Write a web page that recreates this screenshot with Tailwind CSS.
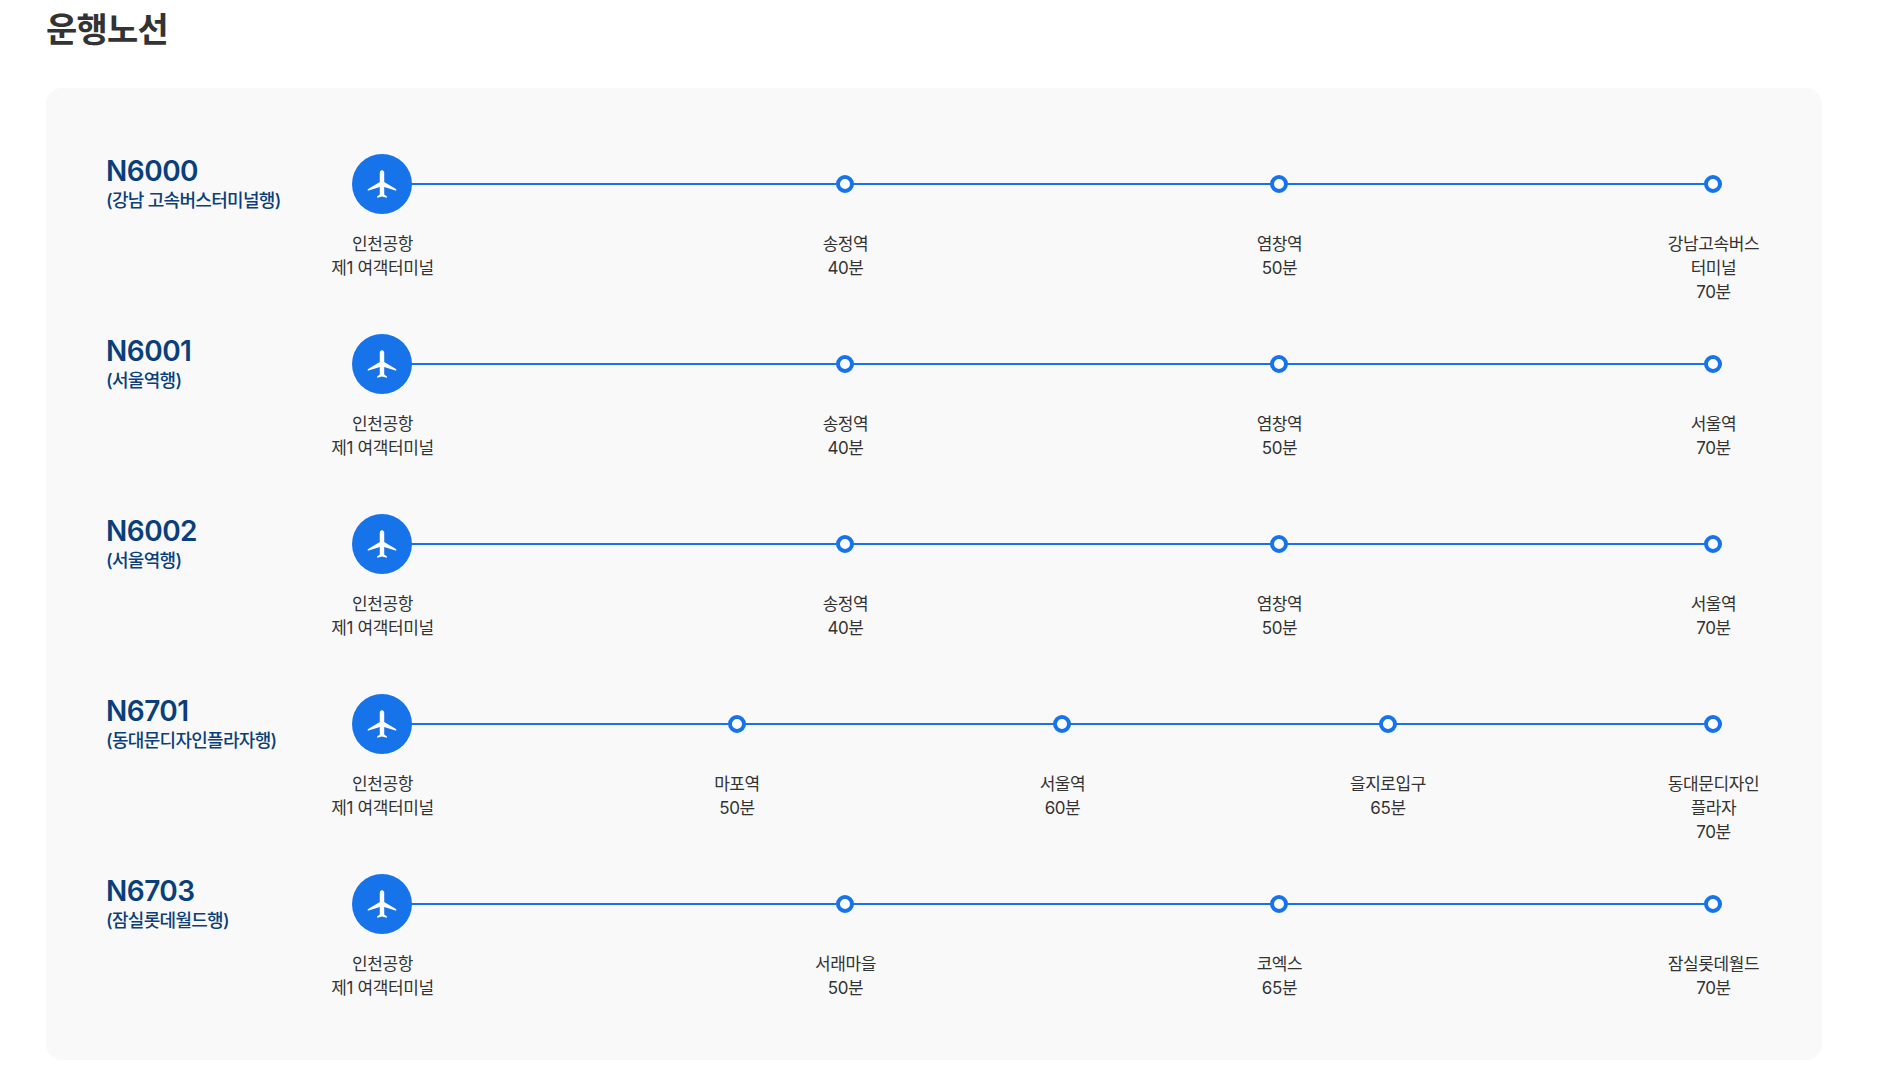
<!DOCTYPE html>
<html lang="ko">
<head>
    <meta charset="UTF-8">
    <title>운행노선</title>
    <script src="https://cdn.jsdelivr.net/npm/@tailwindcss/browser@4"></script>
</head>
<body class="bg-white font-['Inter','Noto_Sans_CJK_KR',sans-serif] text-[#333]">
    <div class="px-[46px]">
        <h2 class="h-[88px] pt-[9px] text-[34px] leading-[42px] font-bold tracking-[-0.8px] text-[#333]">운행노선</h2>

        <div class="w-[1776px] h-[972px] rounded-2xl bg-[#f9f9f9] pt-[66px] px-[60px]">

            <!-- N6000 -->
            <div class="flex h-[180px]">
                <div class="w-[198px] pt-[1px] text-[#0b3f7a]">
                    <p class="text-[28px] leading-[32px] font-semibold tracking-[-0.5px]">N6000</p>
                    <p class="mt-[2px] text-[18px] leading-[24px] font-medium tracking-[-0.7px]">(강남 고속버스터미널행)</p>
                </div>
                <div class="relative flex flex-1 justify-between">
                    <div class="absolute left-[70px] right-[40px] top-[29px] h-[2px] bg-[#1673ea]"></div>
                    <div class="relative flex w-[156px] flex-col items-center">
                        <div class="flex h-[60px] w-[60px] items-center justify-center rounded-full bg-[#1673ea]">
                            <svg class="mt-[1px] h-[38px] w-[38px]" viewBox="0 0 24 24" fill="#fff"><path d="M21 15.6v-.9l-7.600-4.600V4.200c0-.8-.6-1.500-1.400-1.500s-1.400.7-1.400 1.500v5.900L3 14.700v.9l7.600-2.400v4.800l-1.700 1.200v.9l3.100-.8 3.100.8v-.9l-1.700-1.200v-4.800z"/></svg>
                        </div>
                        <p class="mt-[18px] pl-[1px] text-center text-[17px] leading-[24px] whitespace-nowrap tracking-[-0.4px]">인천공항<br>제1 여객터미널</p>
                    </div>
                    <div class="relative flex w-[98px] flex-col items-center">
                        <div class="mt-[21px] h-[18px] w-[18px] rounded-full border-[4px] border-[#1673ea] bg-white"></div>
                        <p class="mt-[39px] pl-[1px] text-center text-[17px] leading-[24px] whitespace-nowrap tracking-[-0.4px]">송정역<br>40분</p>
                    </div>
                    <div class="relative flex w-[98px] flex-col items-center">
                        <div class="mt-[21px] h-[18px] w-[18px] rounded-full border-[4px] border-[#1673ea] bg-white"></div>
                        <p class="mt-[39px] pl-[1px] text-center text-[17px] leading-[24px] whitespace-nowrap tracking-[-0.4px]">염창역<br>50분</p>
                    </div>
                    <div class="relative flex w-[98px] flex-col items-center">
                        <div class="mt-[21px] h-[18px] w-[18px] rounded-full border-[4px] border-[#1673ea] bg-white"></div>
                        <p class="mt-[39px] pl-[1px] text-center text-[17px] leading-[24px] whitespace-nowrap tracking-[-0.4px]">강남고속버스<br>터미널<br>70분</p>
                    </div>
                </div>
            </div>

            <!-- N6001 -->
            <div class="flex h-[180px]">
                <div class="w-[198px] pt-[1px] text-[#0b3f7a]">
                    <p class="text-[28px] leading-[32px] font-semibold tracking-[-0.5px]">N6001</p>
                    <p class="mt-[2px] text-[18px] leading-[24px] font-medium tracking-[-0.7px]">(서울역행)</p>
                </div>
                <div class="relative flex flex-1 justify-between">
                    <div class="absolute left-[70px] right-[40px] top-[29px] h-[2px] bg-[#1673ea]"></div>
                    <div class="relative flex w-[156px] flex-col items-center">
                        <div class="flex h-[60px] w-[60px] items-center justify-center rounded-full bg-[#1673ea]">
                            <svg class="mt-[1px] h-[38px] w-[38px]" viewBox="0 0 24 24" fill="#fff"><path d="M21 15.6v-.9l-7.600-4.600V4.200c0-.8-.6-1.500-1.400-1.500s-1.400.7-1.400 1.500v5.900L3 14.700v.9l7.600-2.400v4.800l-1.700 1.200v.9l3.100-.8 3.100.8v-.9l-1.700-1.200v-4.800z"/></svg>
                        </div>
                        <p class="mt-[18px] pl-[1px] text-center text-[17px] leading-[24px] whitespace-nowrap tracking-[-0.4px]">인천공항<br>제1 여객터미널</p>
                    </div>
                    <div class="relative flex w-[98px] flex-col items-center">
                        <div class="mt-[21px] h-[18px] w-[18px] rounded-full border-[4px] border-[#1673ea] bg-white"></div>
                        <p class="mt-[39px] pl-[1px] text-center text-[17px] leading-[24px] whitespace-nowrap tracking-[-0.4px]">송정역<br>40분</p>
                    </div>
                    <div class="relative flex w-[98px] flex-col items-center">
                        <div class="mt-[21px] h-[18px] w-[18px] rounded-full border-[4px] border-[#1673ea] bg-white"></div>
                        <p class="mt-[39px] pl-[1px] text-center text-[17px] leading-[24px] whitespace-nowrap tracking-[-0.4px]">염창역<br>50분</p>
                    </div>
                    <div class="relative flex w-[98px] flex-col items-center">
                        <div class="mt-[21px] h-[18px] w-[18px] rounded-full border-[4px] border-[#1673ea] bg-white"></div>
                        <p class="mt-[39px] pl-[1px] text-center text-[17px] leading-[24px] whitespace-nowrap tracking-[-0.4px]">서울역<br>70분</p>
                    </div>
                </div>
            </div>

            <!-- N6002 -->
            <div class="flex h-[180px]">
                <div class="w-[198px] pt-[1px] text-[#0b3f7a]">
                    <p class="text-[28px] leading-[32px] font-semibold tracking-[-0.5px]">N6002</p>
                    <p class="mt-[2px] text-[18px] leading-[24px] font-medium tracking-[-0.7px]">(서울역행)</p>
                </div>
                <div class="relative flex flex-1 justify-between">
                    <div class="absolute left-[70px] right-[40px] top-[29px] h-[2px] bg-[#1673ea]"></div>
                    <div class="relative flex w-[156px] flex-col items-center">
                        <div class="flex h-[60px] w-[60px] items-center justify-center rounded-full bg-[#1673ea]">
                            <svg class="mt-[1px] h-[38px] w-[38px]" viewBox="0 0 24 24" fill="#fff"><path d="M21 15.6v-.9l-7.600-4.600V4.200c0-.8-.6-1.500-1.400-1.500s-1.400.7-1.400 1.500v5.900L3 14.700v.9l7.600-2.400v4.800l-1.700 1.200v.9l3.100-.8 3.100.8v-.9l-1.700-1.200v-4.800z"/></svg>
                        </div>
                        <p class="mt-[18px] pl-[1px] text-center text-[17px] leading-[24px] whitespace-nowrap tracking-[-0.4px]">인천공항<br>제1 여객터미널</p>
                    </div>
                    <div class="relative flex w-[98px] flex-col items-center">
                        <div class="mt-[21px] h-[18px] w-[18px] rounded-full border-[4px] border-[#1673ea] bg-white"></div>
                        <p class="mt-[39px] pl-[1px] text-center text-[17px] leading-[24px] whitespace-nowrap tracking-[-0.4px]">송정역<br>40분</p>
                    </div>
                    <div class="relative flex w-[98px] flex-col items-center">
                        <div class="mt-[21px] h-[18px] w-[18px] rounded-full border-[4px] border-[#1673ea] bg-white"></div>
                        <p class="mt-[39px] pl-[1px] text-center text-[17px] leading-[24px] whitespace-nowrap tracking-[-0.4px]">염창역<br>50분</p>
                    </div>
                    <div class="relative flex w-[98px] flex-col items-center">
                        <div class="mt-[21px] h-[18px] w-[18px] rounded-full border-[4px] border-[#1673ea] bg-white"></div>
                        <p class="mt-[39px] pl-[1px] text-center text-[17px] leading-[24px] whitespace-nowrap tracking-[-0.4px]">서울역<br>70분</p>
                    </div>
                </div>
            </div>

            <!-- N6701 -->
            <div class="flex h-[180px]">
                <div class="w-[198px] pt-[1px] text-[#0b3f7a]">
                    <p class="text-[28px] leading-[32px] font-semibold tracking-[-0.5px]">N6701</p>
                    <p class="mt-[2px] text-[18px] leading-[24px] font-medium tracking-[-0.7px]">(동대문디자인플라자행)</p>
                </div>
                <div class="relative flex flex-1 justify-between">
                    <div class="absolute left-[70px] right-[40px] top-[29px] h-[2px] bg-[#1673ea]"></div>
                    <div class="relative flex w-[156px] flex-col items-center">
                        <div class="flex h-[60px] w-[60px] items-center justify-center rounded-full bg-[#1673ea]">
                            <svg class="mt-[1px] h-[38px] w-[38px]" viewBox="0 0 24 24" fill="#fff"><path d="M21 15.6v-.9l-7.600-4.600V4.200c0-.8-.6-1.500-1.400-1.500s-1.400.7-1.400 1.500v5.900L3 14.700v.9l7.600-2.400v4.800l-1.700 1.200v.9l3.100-.8 3.100.8v-.9l-1.700-1.200v-4.800z"/></svg>
                        </div>
                        <p class="mt-[18px] pl-[1px] text-center text-[17px] leading-[24px] whitespace-nowrap tracking-[-0.4px]">인천공항<br>제1 여객터미널</p>
                    </div>
                    <div class="relative flex w-[98px] flex-col items-center">
                        <div class="mt-[21px] h-[18px] w-[18px] rounded-full border-[4px] border-[#1673ea] bg-white"></div>
                        <p class="mt-[39px] pl-[1px] text-center text-[17px] leading-[24px] whitespace-nowrap tracking-[-0.4px]">마포역<br>50분</p>
                    </div>
                    <div class="relative flex w-[98px] flex-col items-center">
                        <div class="mt-[21px] h-[18px] w-[18px] rounded-full border-[4px] border-[#1673ea] bg-white"></div>
                        <p class="mt-[39px] pl-[1px] text-center text-[17px] leading-[24px] whitespace-nowrap tracking-[-0.4px]">서울역<br>60분</p>
                    </div>
                    <div class="relative flex w-[98px] flex-col items-center">
                        <div class="mt-[21px] h-[18px] w-[18px] rounded-full border-[4px] border-[#1673ea] bg-white"></div>
                        <p class="mt-[39px] pl-[1px] text-center text-[17px] leading-[24px] whitespace-nowrap tracking-[-0.4px]">을지로입구<br>65분</p>
                    </div>
                    <div class="relative flex w-[98px] flex-col items-center">
                        <div class="mt-[21px] h-[18px] w-[18px] rounded-full border-[4px] border-[#1673ea] bg-white"></div>
                        <p class="mt-[39px] pl-[1px] text-center text-[17px] leading-[24px] whitespace-nowrap tracking-[-0.4px]">동대문디자인<br>플라자<br>70분</p>
                    </div>
                </div>
            </div>

            <!-- N6703 -->
            <div class="flex h-[180px]">
                <div class="w-[198px] pt-[1px] text-[#0b3f7a]">
                    <p class="text-[28px] leading-[32px] font-semibold tracking-[-0.5px]">N6703</p>
                    <p class="mt-[2px] text-[18px] leading-[24px] font-medium tracking-[-0.7px]">(잠실롯데월드행)</p>
                </div>
                <div class="relative flex flex-1 justify-between">
                    <div class="absolute left-[70px] right-[40px] top-[29px] h-[2px] bg-[#1673ea]"></div>
                    <div class="relative flex w-[156px] flex-col items-center">
                        <div class="flex h-[60px] w-[60px] items-center justify-center rounded-full bg-[#1673ea]">
                            <svg class="mt-[1px] h-[38px] w-[38px]" viewBox="0 0 24 24" fill="#fff"><path d="M21 15.6v-.9l-7.600-4.600V4.200c0-.8-.6-1.500-1.400-1.500s-1.400.7-1.400 1.500v5.900L3 14.700v.9l7.600-2.400v4.800l-1.700 1.200v.9l3.100-.8 3.100.8v-.9l-1.700-1.200v-4.800z"/></svg>
                        </div>
                        <p class="mt-[18px] pl-[1px] text-center text-[17px] leading-[24px] whitespace-nowrap tracking-[-0.4px]">인천공항<br>제1 여객터미널</p>
                    </div>
                    <div class="relative flex w-[98px] flex-col items-center">
                        <div class="mt-[21px] h-[18px] w-[18px] rounded-full border-[4px] border-[#1673ea] bg-white"></div>
                        <p class="mt-[39px] pl-[1px] text-center text-[17px] leading-[24px] whitespace-nowrap tracking-[-0.4px]">서래마을<br>50분</p>
                    </div>
                    <div class="relative flex w-[98px] flex-col items-center">
                        <div class="mt-[21px] h-[18px] w-[18px] rounded-full border-[4px] border-[#1673ea] bg-white"></div>
                        <p class="mt-[39px] pl-[1px] text-center text-[17px] leading-[24px] whitespace-nowrap tracking-[-0.4px]">코엑스<br>65분</p>
                    </div>
                    <div class="relative flex w-[98px] flex-col items-center">
                        <div class="mt-[21px] h-[18px] w-[18px] rounded-full border-[4px] border-[#1673ea] bg-white"></div>
                        <p class="mt-[39px] pl-[1px] text-center text-[17px] leading-[24px] whitespace-nowrap tracking-[-0.4px]">잠실롯데월드<br>70분</p>
                    </div>
                </div>
            </div>

        </div>
    </div>
</body>
</html>
